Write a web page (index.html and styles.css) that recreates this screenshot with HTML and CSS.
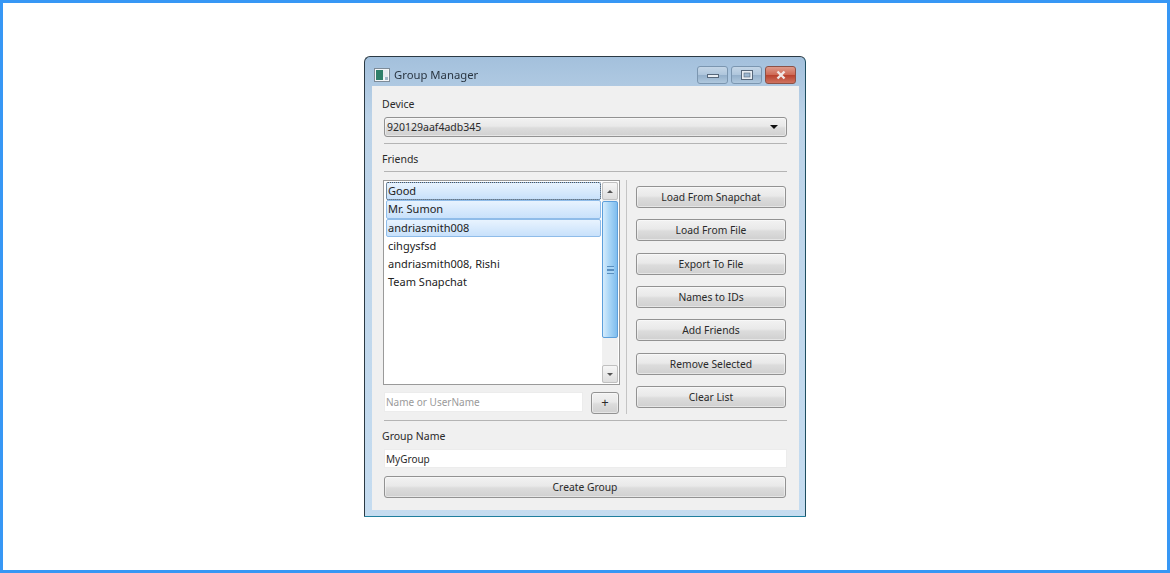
FILE: index.html
```html
<!doctype html>
<html>
  <head>
    <meta charset="utf-8" />
    <title>Group Manager</title>
    <link rel="stylesheet" href="styles.css">
  </head>
  <body>
    <div class="window">
      <div class="titlebar">
        <svg class="appicon" width="16" height="14" viewBox="0 0 16 14">
          <rect x="0.5" y="0.5" width="15" height="13" fill="#f4f6f8" stroke="#7d8b98"/>
          <rect x="2" y="2" width="7" height="10" fill="#2f7f6a"/>
          <rect x="9" y="2" width="5" height="7" fill="#e6ebf0"/>
          <rect x="11" y="9" width="3" height="3" fill="#9fb4c6"/>
        </svg>
        <span class="title">Group Manager</span>
        <div class="caption">
          <div class="capbtn">
            <svg width="12" height="6" viewBox="0 0 12 6"><rect x="0.5" y="2.5" width="11" height="3" fill="#e8eef4" stroke="#56677a"/></svg>
          </div>
          <div class="capbtn">
            <svg width="12" height="10" viewBox="0 0 12 10"><rect x="0.5" y="0.5" width="11" height="9" fill="#e8eef4" stroke="#56677a"/><rect x="3" y="3" width="6" height="4" fill="#9db8d2" stroke="#56677a" stroke-width="0.6"/></svg>
          </div>
          <div class="capbtn close">
            <svg width="12" height="10" viewBox="0 0 12 10"><path d="M2.5 1.5 L9.5 8.5 M9.5 1.5 L2.5 8.5" stroke="#f0e8e6" stroke-width="2.4"/></svg>
          </div>
        </div>
      </div>
      <div class="client">
        <div class="label label-device">Device</div>
        <div class="combo">
          <span>920129aaf4adb345</span>
          <span class="combo-arrow"></span>
        </div>
        <div class="sep sep-a"></div>
        <div class="label label-friends">Friends</div>
        <div class="sep sep-b"></div>
        <div class="middle">
          <div class="left">
            <div class="listbox">
              <div class="items">
                <div class="item sel focus">Good</div>
                <div class="item sel">Mr. Sumon</div>
                <div class="item sel">andriasmith008</div>
                <div class="item">cihgysfsd</div>
                <div class="item">andriasmith008, Rishi</div>
                <div class="item">Team Snapchat</div>
              </div>
              <div class="scroll">
                <div class="sbtn"><span class="tri up"></span></div>
                <div class="thumb"><span class="grip"></span></div>
                <div class="strack"></div>
                <div class="sbtn"><span class="tri down"></span></div>
              </div>
            </div>
            <div class="addrow">
              <div class="input placeholder">Name or UserName</div>
              <div class="btn plus">+</div>
            </div>
          </div>
          <div class="vsep"></div>
          <div class="actions">
            <div class="btn">Load From Snapchat</div>
            <div class="btn">Load From File</div>
            <div class="btn">Export To File</div>
            <div class="btn">Names to IDs</div>
            <div class="btn">Add Friends</div>
            <div class="btn">Remove Selected</div>
            <div class="btn">Clear List</div>
          </div>
        </div>
        <div class="sep sep-c"></div>
        <div class="label label-group">Group Name</div>
        <div class="input group-input">MyGroup</div>
        <div class="btn create">Create Group</div>
      </div>
    </div>
  </body>
</html>
```

FILE: styles.css
```css
* { margin: 0; padding: 0; box-sizing: border-box; }
html, body { height: 100%; }
body {
  background: #fff;
  border: 3px solid #3797f5;
  font-family: "Noto Sans", "DejaVu Sans", sans-serif;
  font-size: 10.5px;
  color: #2a2a2a;
  padding: 53px 0 0 361px;
  overflow: hidden;
}

.window {
  width: 442px;
  height: 461px;
  background: linear-gradient(#a3c0dc, #bcd3e8 60px, #c5dcf0);
  border: 1px solid #2b3a44;
  border-bottom-color: #1f7f9e;
  border-right-color: #1e4e60;
  border-radius: 6px 6px 1px 1px;
  padding: 0 6px 6px 7px;
  display: flex;
  flex-direction: column;
  filter: blur(0.35px);
}

.titlebar {
  height: 29px;
  flex: none;
  display: flex;
  align-items: center;
  padding: 6px 0 0 2px;
}
.appicon { margin-right: 4px; }
.title { font-size: 11.3px; color: #2a3642; }
.caption { margin-left: auto; display: flex; gap: 3px; margin-right: 3px; }
.capbtn {
  width: 31px;
  height: 18px;
  border: 1px solid #7b96b0;
  border-radius: 3px;
  background: linear-gradient(#c4d6e7, #afc6dc 48%, #94b0cb 52%, #afc8de);
  display: flex;
  align-items: center;
  justify-content: center;
}
.capbtn.close {
  border-color: #8c5146;
  background: linear-gradient(#dd9a8b, #cf6a55 48%, #b9422e 52%, #cf7360);
}

.client {
  flex: 1;
  background: #f0f0f0;
  padding: 0 12px 0 12px;
  display: flex;
  flex-direction: column;
}

.label { height: 14px; line-height: 14px; margin-left: -2px; }
.label-device { margin-top: 11px; }
.label-friends { margin-top: 8px; }
.label-group { margin-top: 8px; }

.sep { height: 1px; background: #b4b4b4; flex: none; }
.sep-a { margin-top: 6px; }
.sep-b { margin-top: 5px; }
.sep-c { margin-top: 6px; }

.combo, .btn {
  border: 1px solid #929292;
  border-radius: 3px;
  background: linear-gradient(#f2f2f2, #e9e9e9 45%, #dcdcdc 55%, #d0d0d0);
  box-shadow: inset 0 0 0 1px rgba(255, 255, 255, 0.45);
}
.combo {
  height: 20px;
  margin-top: 6px;
  display: flex;
  align-items: center;
  justify-content: space-between;
  padding: 0 8px 1px 2px;
  flex: none;
}
.combo-arrow {
  width: 0;
  height: 0;
  border-left: 4px solid transparent;
  border-right: 4px solid transparent;
  border-top: 4px solid #111;
}

.middle { display: flex; margin-top: 8px; height: 234px; flex: none; }
.left { width: 237px; margin-left: -1px; display: flex; flex-direction: column; }
.listbox {
  height: 205px;
  background: #fff;
  border: 1px solid #9a9a9a;
  display: flex;
  padding: 1px;
  flex: none;
}
.items { flex: 1; min-width: 0; padding-left: 1px; }
.item {
  height: 18.3px;
  line-height: 18px;
  padding-left: 2px;
  font-size: 11px;
  color: #222;
}
.item.sel {
  background: linear-gradient(#e8f3fe, #c8e1fb);
  border: 1px solid #8fbce9;
  border-radius: 2px;
  line-height: 16px;
  padding-left: 1px;
}
.item.focus { outline: 1px dotted #555; outline-offset: -1px; }

.scroll { width: 16px; margin-left: 1px; display: flex; flex-direction: column; background: #f0f0f0; }
.sbtn {
  height: 18px;
  flex: none;
  border: 1px solid #c0c0c0;
  border-radius: 2px;
  background: linear-gradient(#f6f6f6, #dedede);
  display: flex;
  align-items: center;
  justify-content: center;
}
.tri { width: 0; height: 0; border-left: 3px solid transparent; border-right: 3px solid transparent; }
.tri.up { border-bottom: 3px solid #555; }
.tri.down { border-top: 3px solid #555; }
.thumb {
  height: 137px;
  flex: none;
  margin-top: 1px;
  border: 1px solid #5c9fdb;
  border-radius: 2px;
  background: linear-gradient(90deg, #d6ecfc, #a9d6f7 45%, #7fbdee);
  display: flex;
  align-items: center;
  justify-content: center;
}
.grip { width: 7px; height: 8px; border-top: 1px solid #5a8fc0; border-bottom: 1px solid #5a8fc0; background: linear-gradient(#a9d6f7 40%, #5a8fc0 40%, #5a8fc0 60%, #a9d6f7 60%); }
.strack { flex: 1; }

.addrow { display: flex; justify-content: space-between; margin-top: 7px; padding: 0 1px; }
.input {
  height: 20px;
  background: #fff;
  border: 1px solid #ececec;
  font-size: 10px;
  line-height: 19px;
  padding-left: 1px;
  flex: none;
}
.addrow .input { width: 199px; }
.placeholder { color: #9a9a9a; }

.btn {
  height: 22px;
  font-size: 10.3px;
  line-height: 20px;
  text-align: center;
  flex: none;
}
.btn.plus { width: 28px; font-size: 13px; line-height: 19px; }

.vsep { width: 1px; background: #c4c4c4; margin-left: 6px; flex: none; }

.actions {
  width: 150px;
  margin-left: 9px;
  padding-top: 6px;
  display: flex;
  flex-direction: column;
  gap: 11.33px;
}

.group-input { margin-top: 6px; height: 19px; line-height: 18px; }
.create { margin-top: 8px; margin-right: 1px; }
```
